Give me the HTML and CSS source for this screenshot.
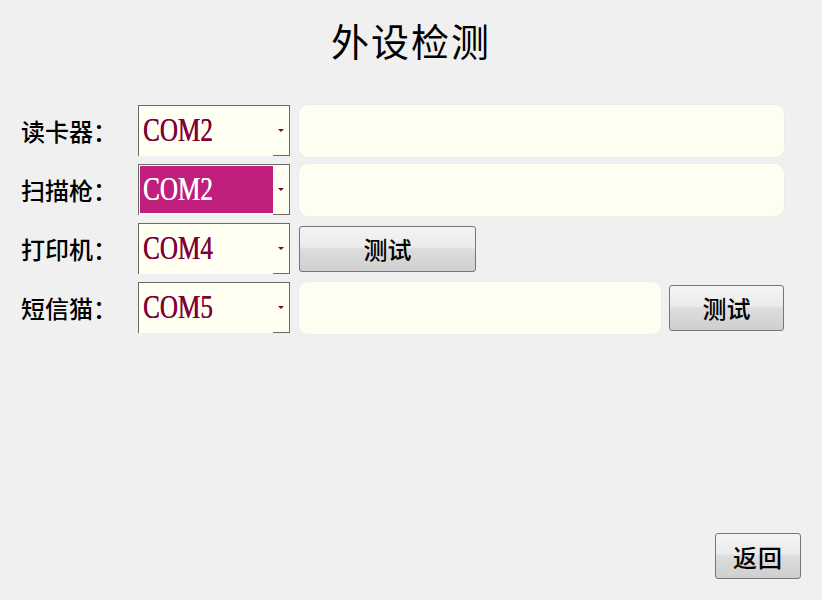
FILE: index.html
```html
<!DOCTYPE html>
<html lang="zh-CN">
<head>
    <meta charset="UTF-8">
    <title>外设检测</title>
    <link rel="stylesheet" href="styles.css">
</head>
<body>
    <div class="screen">
        <h1 class="title">外设检测</h1>

        <div class="rows">
            <div class="row">
                <span class="label">读卡器：</span>
                <div class="combo">
                    <span class="combo-value"><span class="combo-text">COM2</span></span>
                    <span class="combo-arrow"></span>
                </div>
                <div class="field field-wide"></div>
            </div>

            <div class="row">
                <span class="label">扫描枪：</span>
                <div class="combo">
                    <span class="combo-value selected"><span class="combo-text">COM2</span></span>
                    <span class="combo-arrow"></span>
                </div>
                <div class="field field-wide"></div>
            </div>

            <div class="row">
                <span class="label">打印机：</span>
                <div class="combo">
                    <span class="combo-value"><span class="combo-text">COM4</span></span>
                    <span class="combo-arrow"></span>
                </div>
                <button class="btn btn-print">测试</button>
            </div>

            <div class="row">
                <span class="label">短信猫：</span>
                <div class="combo">
                    <span class="combo-value"><span class="combo-text">COM5</span></span>
                    <span class="combo-arrow"></span>
                </div>
                <div class="field field-short"></div>
                <button class="btn btn-sms">测试</button>
            </div>
        </div>

        <div class="footer">
            <button class="btn btn-back">返回</button>
        </div>
    </div>
</body>
</html>
```

FILE: styles.css
```css
body {
    margin: 0;
    background-color: #f0f0f0;
    font-family: "Noto Sans CJK SC", sans-serif;
}

.screen {
    width: 822px;
    height: 600px;
    display: flex;
    flex-direction: column;
}

.title {
    margin: 0;
    height: 80px;
    line-height: 80px;
    text-align: center;
    font-size: 38px;
    font-weight: normal;
    color: #000;
    letter-spacing: 2px;
}

.rows {
    margin-top: 21px;
    display: flex;
    flex-direction: column;
}

.row {
    height: 59px;
    display: flex;
    align-items: center;
}

.label {
    width: 138px;
    padding-left: 21px;
    box-sizing: border-box;
    font-size: 24px;
    font-weight: 500;
    color: #000;
    white-space: nowrap;
}

.combo {
    width: 152px;
    height: 51px;
    box-sizing: border-box;
    display: flex;
    background-color: #fffff2;
    border-top: 1px solid #6b6b63;
    border-left: 1px solid #6b6b63;
    border-right: 1px solid #6b6b63;
}

.combo-value {
    flex: 1;
    margin: 1px 0 2px 1px;
    padding-left: 3px;
    display: flex;
    align-items: center;
    overflow: hidden;
    color: #80003a;
}

.combo-value.selected {
    background-color: #c01f7d;
    color: #fff;
}

.combo-text {
    font-family: "Liberation Serif", serif;
    font-size: 33px;
    line-height: 1;
    transform: scaleX(0.76);
    transform-origin: left center;
    white-space: nowrap;
    text-shadow: 0.4px 0 0 currentColor;
}

.combo-arrow {
    width: 16px;
    position: relative;
    border-bottom: 1px solid #6b6b63;
}

.combo-arrow::after {
    content: "";
    position: absolute;
    left: 5px;
    top: 23px;
    border-left: 3px solid transparent;
    border-right: 3px solid transparent;
    border-top: 3px solid #80003a;
}

.field {
    height: 54px;
    margin-left: 8px;
    box-sizing: border-box;
    background-color: #fdfff0;
    border: 1px solid #ececec;
    border-radius: 10px;
}

.field-wide {
    width: 487px;
}

.field-short {
    width: 364px;
}

.btn {
    height: 46px;
    box-sizing: border-box;
    padding: 0;
    border: 1px solid #767676;
    border-radius: 3px;
    background: linear-gradient(#f4f4f4 0%, #ebebeb 45%, #dddddd 50%, #cfcfcf 100%);
    font-family: "Noto Sans CJK SC", sans-serif;
    font-size: 24px;
    font-weight: 500;
    color: #000;
    cursor: pointer;
}

.btn-print {
    width: 177px;
    margin-left: 9px;
}

.btn-sms {
    width: 115px;
    margin-left: 7px;
}

.footer {
    margin-top: auto;
    padding: 0 21px 21px 0;
    display: flex;
    justify-content: flex-end;
}

.btn-back {
    width: 86px;
    letter-spacing: 1px;
}
```
